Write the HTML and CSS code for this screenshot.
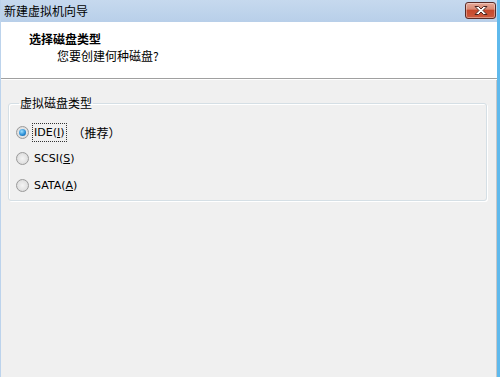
FILE: index.html
```html
<!DOCTYPE html>
<html lang="zh-CN">
<head>
<meta charset="utf-8">
<title>新建虚拟机向导</title>
<link rel="stylesheet" href="styles.css">
</head>
<body>
<div class="window">
  <div class="titlebar">
    <span class="title">新建虚拟机向导</span>
    <button class="close" aria-label="关闭">
      <svg width="16" height="11" viewBox="0 0 16 11">
        <path d="M2 1.5 L5.5 1.5 L8 4 L10.5 1.5 L14 1.5 L10 5.5 L14 9.5 L10.5 9.5 L8 7 L5.5 9.5 L2 9.5 L6 5.5 Z" fill="#ffffff" stroke="#4a2420" stroke-width="1" stroke-linejoin="round"/>
      </svg>
    </button>
  </div>
  <div class="header">
    <div class="heading">选择磁盘类型</div>
    <div class="subheading">您要创建何种磁盘?</div>
  </div>
  <div class="body">
    <fieldset class="group">
      <legend class="group-label">虚拟磁盘类型</legend>
      <label class="option">
        <span class="radio checked"></span>
        <span class="opt-text focus">IDE(<u>I</u>)</span>
        <span class="note">（推荐）</span>
      </label>
      <label class="option">
        <span class="radio"></span>
        <span class="opt-text">SCSI(<u>S</u>)</span>
      </label>
      <label class="option">
        <span class="radio"></span>
        <span class="opt-text">SATA(<u>A</u>)</span>
      </label>
    </fieldset>
  </div>
</div>
</body>
</html>
```

FILE: styles.css
```css
html, body {
  margin: 0;
  padding: 0;
}
body {
  width: 500px;
  height: 377px;
  overflow: hidden;
  background: #f0f0f0;
  font-family: "DejaVu Sans", "Noto Sans CJK SC", sans-serif;
  font-size: 12px;
  color: #000;
}
.window {
  box-sizing: border-box;
  width: 500px;
  height: 377px;
  display: flex;
  flex-direction: column;
  border-left: 1px solid #bcd3ec;
  border-right: 3px solid #5fb9ec;
  box-shadow: inset -1px 0 0 #c8c8c8;
  background: #f0f0f0;
}
.titlebar {
  height: 22px;
  flex: none;
  display: flex;
  align-items: center;
  justify-content: space-between;
  background: linear-gradient(#c6d9ee, #b8cfe9);
  padding: 0 0 0 3px;
}
.title {
  font-family: "Noto Sans CJK SC", sans-serif;
  font-size: 12px;
  line-height: 22px;
  color: #000;
}
.close {
  width: 31px;
  height: 17px;
  margin: 0 1px 1px 0;
  padding: 0;
  border: 1px solid #5a2a25;
  border-radius: 3px;
  background: linear-gradient(#e6a898 0%, #d88a74 40%, #c6482c 50%, #cc5a3e 100%);
  box-shadow: inset 0 0 0 1px rgba(255,255,255,0.35);
  display: flex;
  align-items: center;
  justify-content: center;
}
.header {
  flex: none;
  height: 57px;
  background: #fff;
  border-bottom: 1px solid #a0a0a0;
  box-sizing: border-box;
  padding: 9px 0 0 28px;
}
.heading {
  font-family: "Noto Sans CJK SC", sans-serif;
  font-weight: bold;
  font-size: 12px;
  line-height: 16px;
}
.subheading {
  font-family: "Noto Sans CJK SC", sans-serif;
  font-size: 12px;
  line-height: 16px;
  margin: 1px 0 0 28px;
}
.body {
  flex: 1;
  border-top: 1px solid #fff;
  padding: 16px 10px 0 7px;
}
.group {
  margin: 0;
  padding: 9px 0 0 7px;
  border: 1px solid #d5dfe5;
  border-radius: 3px;
  box-shadow: 1px 1px 0 #fff, inset 1px 1px 0 #fff;
  height: 105px;
  box-sizing: border-box;
  display: block;
}
.group-label {
  font-family: "Noto Sans CJK SC", sans-serif;
  font-size: 12px;
  line-height: 14px;
  padding: 0 1px;
  margin-left: 3px;
}
.option {
  display: flex;
  align-items: center;
  height: 26.5px;
}
.radio {
  width: 11px;
  height: 11px;
  border-radius: 50%;
  border: 1px solid #9a9a9a;
  background: radial-gradient(circle at 50% 50%, #f4f4f4 0%, #e2e2e2 60%, #cfcfcf 100%);
  margin-right: 3px;
  flex: none;
  position: relative;
}
.radio.checked::after {
  content: "";
  position: absolute;
  left: 2px;
  top: 2px;
  width: 7px;
  height: 7px;
  border-radius: 50%;
  background: radial-gradient(circle at 40% 35%, #9fe0ff 0%, #2b8fd6 55%, #0d4f8e 100%);
}
.opt-text {
  font-family: "DejaVu Sans", sans-serif;
  font-size: 11px;
  line-height: 15px;
  padding: 1px 1px;
  border: 1px dotted transparent;
}
.opt-text.focus {
  border-color: #333;
}
.note {
  font-family: "Noto Sans CJK SC", sans-serif;
  font-size: 12px;
  margin-left: 6px;
}
```
